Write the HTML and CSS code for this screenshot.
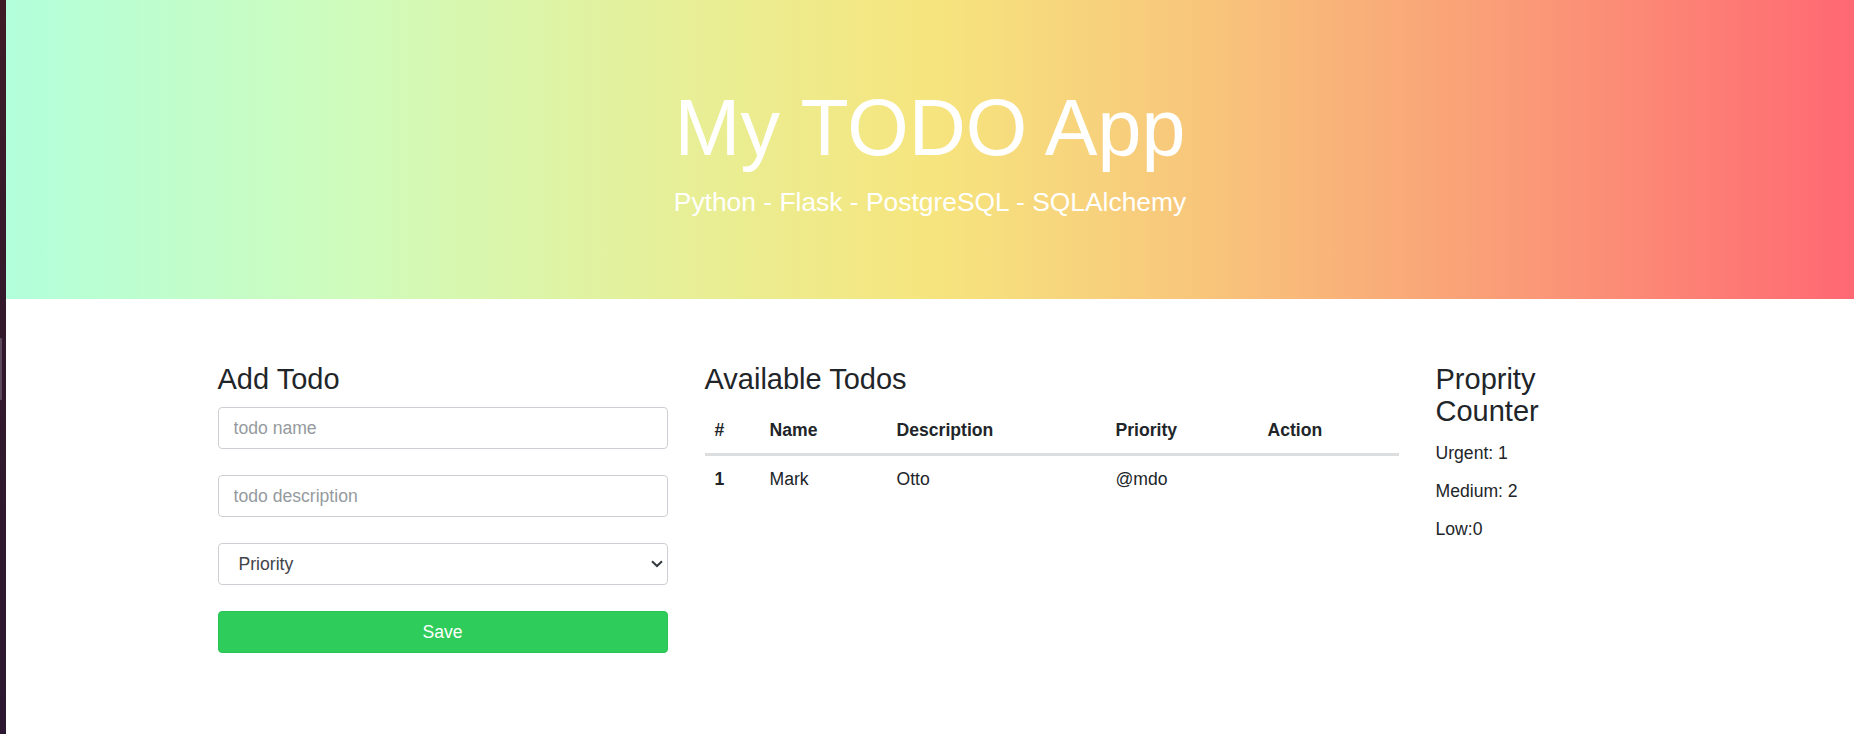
FILE: index.html
```html
<!DOCTYPE html>
<html lang="en">
<head>
<meta charset="utf-8">
<title>My TODO App</title>
<link rel="stylesheet" href="styles.css">
</head>
<body>
<div class="dock"><div class="dock-handle"></div></div>
<div class="page">
  <header class="hero">
    <h1 class="hero-title">My TODO App</h1>
    <p class="hero-lead">Python - Flask - PostgreSQL - SQLAlchemy</p>
  </header>
  <main class="content">
    <section class="col col-form">
      <h3 class="heading heading-form">Add Todo</h3>
      <form class="todo-form">
        <input class="field" type="text" placeholder="todo name">
        <input class="field" type="text" placeholder="todo description">
        <div class="select-wrap">
          <select class="field field-select">
            <option>Priority</option>
            <option>Urgent</option>
            <option>Medium</option>
            <option>Low</option>
          </select>
          <svg class="chevron" width="12" height="8" viewBox="0 0 12 8"><path d="M1 1.2 L6 6 L11 1.2" fill="none" stroke="#343a40" stroke-width="2"/></svg>
        </div>
        <button class="btn-save" type="button">Save</button>
      </form>
    </section>
    <section class="col col-table">
      <h3 class="heading">Available Todos</h3>
      <table class="todo-table">
        <colgroup>
          <col class="c1"><col class="c2"><col class="c3"><col class="c4"><col class="c5">
        </colgroup>
        <thead>
          <tr><th class="num">#</th><th>Name</th><th>Description</th><th>Priority</th><th>Action</th></tr>
        </thead>
        <tbody>
          <tr><th class="num row-head">1</th><td>Mark</td><td>Otto</td><td>@mdo</td><td></td></tr>
        </tbody>
      </table>
    </section>
    <section class="col col-counter">
      <h3 class="heading heading-counter">Proprity Counter</h3>
      <p class="count">Urgent: 1</p>
      <p class="count">Medium: 2</p>
      <p class="count">Low:0</p>
    </section>
  </main>
</div>
</body>
</html>
```
FILE: styles.css
```css
html, body {
  margin: 0;
  padding: 0;
  height: 100%;
}
body {
  display: flex;
  font-family: "Liberation Sans", Arial, sans-serif;
  font-size: 17.6px;
  line-height: 1.5;
  color: #212529;
  background: #fff;
  overflow: hidden;
}
.dock {
  width: 6px;
  flex: 0 0 6px;
  background: linear-gradient(to bottom, #3e1c27 0%, #34192c 40%, #2b1830 100%);
}
.dock-handle {
  margin-top: 338px;
  width: 2px;
  height: 62px;
  background: #5c4a5c;
  border-radius: 0 1px 1px 0;
}
.page {
  flex: 1 1 auto;
  min-width: 0;
}
.hero {
  box-sizing: border-box;
  height: 299px;
  padding-top: 81px;
  text-align: center;
  color: #fff;
  background: linear-gradient(to right, #b2ffdb 0%, #cefcbd 18%, #e9ee94 38%, #f6e57e 50%, #f8c57b 65%, #fa9a77 82%, #ff6873 100%);
}
.hero-title {
  margin: 0;
  font-size: 79px;
  font-weight: 400;
  line-height: 1.2;
}
.hero-lead {
  margin: 7px 0 0;
  font-size: 26.4px;
  line-height: 1.5;
}
.content {
  width: 1425px;
  margin: 0 auto;
  padding-top: 64px;
  display: grid;
  grid-template-columns: 450px 694px 206px;
  column-gap: 37px;
  align-items: start;
}
.heading {
  margin: 0 0 12px;
  font-size: 29px;
  font-weight: 400;
  line-height: 32px;
  color: #212529;
}
.heading-form {
  margin-bottom: 12px;
}
.heading-counter {
  margin-bottom: 13px;
}
.todo-form {
  display: flex;
  flex-direction: column;
  gap: 26px;
}
.field {
  box-sizing: border-box;
  display: block;
  width: 100%;
  height: 42px;
  margin: 0;
  padding: 6px 15px;
  font-family: inherit;
  font-size: 17.6px;
  line-height: 1.5;
  color: #495057;
  background: #fff;
  border: 1px solid #ccd0d4;
  border-radius: 4px;
  outline: none;
}
.field::placeholder {
  color: #959a9e;
  opacity: 1;
}
.select-wrap {
  position: relative;
}
.field-select {
  -webkit-appearance: none;
  appearance: none;
  padding-left: 20px;
  color: #3f4449;
}
.chevron {
  position: absolute;
  right: 5px;
  top: 17px;
  pointer-events: none;
}
.btn-save {
  box-sizing: border-box;
  display: block;
  width: 100%;
  height: 42px;
  margin: 0;
  padding: 6px 12px;
  font-family: inherit;
  font-size: 17.6px;
  line-height: 1.5;
  color: #fff;
  background: #2ecc5a;
  border: 1px solid #2ac355;
  border-radius: 4px;
}
.todo-table {
  width: 694px;
  table-layout: fixed;
  border-collapse: separate;
  border-spacing: 0;
}
.c1 { width: 54px; }
.c2 { width: 127px; }
.c3 { width: 219px; }
.c4 { width: 152px; }
.c5 { width: 142px; }
.todo-table th,
.todo-table td {
  padding: 10px 11px;
  text-align: left;
  vertical-align: top;
  line-height: 26.4px;
}
.todo-table thead th {
  font-weight: 700;
  border-bottom: 2px solid #dcdedf;
}
.todo-table tbody th,
.todo-table tbody td {
  border-top: 1px solid #dcdedf;
}
.todo-table .num {
  padding-left: 10px;
}
.todo-table .row-head {
  font-weight: 700;
}
.count {
  margin: 0 0 11.4px;
  line-height: 26.4px;
}
```
